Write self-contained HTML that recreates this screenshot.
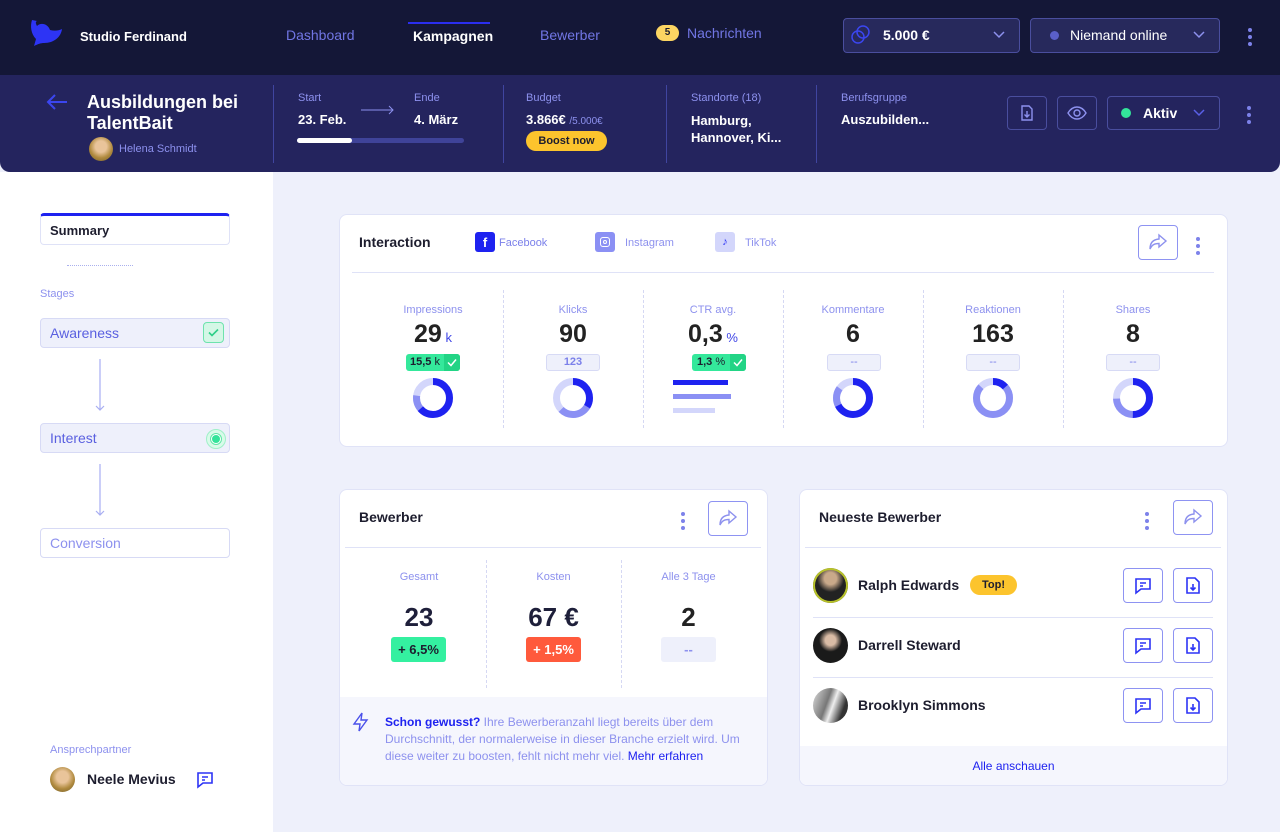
<!DOCTYPE html>
<html><head><meta charset="utf-8"><style>
*{box-sizing:border-box;margin:0;padding:0}
body{width:1280px;height:832px;overflow:hidden;background:#eef0fb;font-family:"Liberation Sans",sans-serif;position:relative;color:#1d1d2e}
.a{position:absolute}
.nav{left:0;top:0;width:1280px;height:75px;background:#141737}
.hdr{left:0;top:75px;width:1280px;height:97px;background:#24245e;border-radius:0 0 10px 10px}
.lbl{font-size:11px;color:#8d91ee}
.w{color:#fff;font-weight:bold;font-size:13px}
.vd{width:1px;background:#4045a0}
.btn{border:1px solid #4a4e9e;border-radius:4px}
.card{background:#fff;border:1px solid #e0e3f7;border-radius:8px}
.col{width:140px;text-align:center}
.dash{border-left:1px dashed #d5d8f3}
.ob{border:1px solid #8e93f2;border-radius:4px;background:#fff}
.hl{height:1px;background:#dfe2f7}
.kb{width:4px}
.kb i{display:block;width:4px;height:4px;border-radius:2px;background:#7d82ea;margin-bottom:3px}
</style></head><body>
<div class="a nav"></div>
<svg class="a" style="left:28px;top:18px" width="36" height="30" viewBox="0 0 36 30"><path d="M4 2C2 8 3 16 8 21L6 28C10 26 13 25 16 25C26 25 33 19 34 11C30 13 26 13 22 12C20 6 13 4 9 8C8 6 7 4 9 3Z" fill="#2d34f5"/></svg>
<div class="a" style="left:80px;top:29px;color:#fff;font-size:13px;font-weight:bold">Studio Ferdinand</div>
<div class="a" style="left:286px;top:27px;color:#7176e4;font-size:14px">Dashboard</div>
<div class="a" style="left:408px;top:22px;width:82px;height:2px;background:#2b2ef0"></div>
<div class="a" style="left:413px;top:28px;color:#fff;font-size:14px;font-weight:bold">Kampagnen</div>
<div class="a" style="left:540px;top:27px;color:#7176e4;font-size:14px">Bewerber</div>
<div class="a" style="left:656px;top:25px;width:23px;height:16px;border-radius:8px;background:#fcd562;font-size:10px;font-weight:bold;text-align:center;line-height:16px">5</div>
<div class="a" style="left:687px;top:25px;color:#7176e4;font-size:14px">Nachrichten</div>
<div class="a btn" style="left:843px;top:18px;width:177px;height:35px;background:#27295c"></div>
<svg class="a" style="left:851px;top:25px" width="20" height="20" viewBox="0 0 20 20" fill="none" stroke="#3b46f0" stroke-width="1.5"><circle cx="7" cy="12" r="6"/><circle cx="12" cy="7" r="6"/></svg>
<div class="a" style="left:883px;top:27px;color:#fff;font-weight:bold;font-size:14px">5.000 €</div>
<svg class="a" style="left:993px;top:31px" width="12" height="8"><path d="M1 1l5 5 5-5" fill="none" stroke="#8d91ee" stroke-width="1.5"/></svg>
<div class="a btn" style="left:1030px;top:18px;width:190px;height:35px;background:#27295c"></div>
<div class="a" style="left:1050px;top:31px;width:9px;height:9px;border-radius:5px;background:#5a5fc8"></div>
<div class="a" style="left:1070px;top:27px;color:#fff;font-size:14px">Niemand online</div>
<svg class="a" style="left:1193px;top:31px" width="12" height="8"><path d="M1 1l5 5 5-5" fill="none" stroke="#8d91ee" stroke-width="1.5"/></svg>
<div class="a kb" style="left:1248px;top:28px"><i></i><i></i><i></i></div>

<div class="a hdr"></div>
<svg class="a" style="left:46px;top:94px" width="22" height="16"><path d="M21 8H2M9 1L2 8l7 7" fill="none" stroke="#3b46f0" stroke-width="2"/></svg>
<div class="a" style="left:87px;top:92px;color:#fff;font-weight:bold;font-size:18px;line-height:21px">Ausbildungen bei<br>TalentBait</div>
<div class="a" style="left:89px;top:137px;width:24px;height:24px;border-radius:12px;background:radial-gradient(circle at 50% 40%,#e9c49a 30%,#b08a3e 60%,#6b5a2a)"></div>
<div class="a" style="left:119px;top:143px;font-size:11px;color:#8d91ee">Helena Schmidt</div>
<div class="a vd" style="left:273px;top:85px;height:78px"></div>
<div class="a lbl" style="left:298px;top:92px">Start</div>
<svg class="a" style="left:361px;top:105px" width="34" height="10"><path d="M0 5h32M28 1l4 4-4 4" fill="none" stroke="#8d91ee" stroke-width="1"/></svg>
<div class="a lbl" style="left:414px;top:92px">Ende</div>
<div class="a w" style="left:298px;top:112px">23. Feb.</div>
<div class="a w" style="left:414px;top:112px">4. März</div>
<div class="a" style="left:297px;top:138px;width:167px;height:5px;border-radius:3px;background:#3f4399"></div>
<div class="a" style="left:297px;top:138px;width:55px;height:5px;border-radius:3px;background:#fff"></div>
<div class="a vd" style="left:503px;top:85px;height:78px"></div>
<div class="a lbl" style="left:526px;top:92px">Budget</div>
<div class="a w" style="left:526px;top:112px">3.866€ <span style="font-weight:normal;font-size:10px;color:#8d91ee">/5.000€</span></div>
<div class="a" style="left:526px;top:131px;width:81px;height:20px;border-radius:10px;background:#fcc42d;font-size:11px;font-weight:bold;text-align:center;line-height:20px">Boost now</div>
<div class="a vd" style="left:666px;top:85px;height:78px"></div>
<div class="a lbl" style="left:691px;top:92px">Standorte (18)</div>
<div class="a w" style="left:691px;top:112px;line-height:17px">Hamburg,<br>Hannover, Ki...</div>
<div class="a vd" style="left:816px;top:85px;height:78px"></div>
<div class="a lbl" style="left:841px;top:92px">Berufsgruppe</div>
<div class="a w" style="left:841px;top:112px">Auszubilden...</div>
<div class="a btn" style="left:1007px;top:96px;width:40px;height:34px"></div>
<svg class="a" style="left:1018px;top:104px" width="18" height="18" viewBox="0 0 18 18" fill="none" stroke="#8d91ee" stroke-width="1.4"><path d="M4 2h7l3 3v11H4z"/><path d="M9 7v6M6.5 10.5L9 13l2.5-2.5"/></svg>
<div class="a btn" style="left:1057px;top:96px;width:40px;height:34px"></div>
<svg class="a" style="left:1067px;top:105px" width="20" height="16" viewBox="0 0 20 16" fill="none" stroke="#8d91ee" stroke-width="1.4"><path d="M1 8C4 3 7 2 10 2s6 1 9 6c-3 5-6 6-9 6S4 13 1 8z"/><circle cx="10" cy="8" r="3"/></svg>
<div class="a btn" style="left:1107px;top:96px;width:113px;height:34px"></div>
<div class="a" style="left:1121px;top:108px;width:10px;height:10px;border-radius:5px;background:#33e49a"></div>
<div class="a" style="left:1143px;top:105px;color:#fff;font-weight:bold;font-size:14px">Aktiv</div>
<svg class="a" style="left:1193px;top:109px" width="12" height="8"><path d="M1 1l5 5 5-5" fill="none" stroke="#5a60e8" stroke-width="1.5"/></svg>
<div class="a kb" style="left:1247px;top:106px"><i></i><i></i><i></i></div>

<!-- sidebar -->
<div class="a" style="left:0;top:172px;width:273px;height:660px;background:#fff"></div>
<div class="a" style="left:40px;top:213px;width:190px;height:32px;border:1px solid #dfe2f7;border-top:3px solid #1e22f0;border-radius:4px;font-size:13px;font-weight:bold;padding:7px 9px">Summary</div>
<div class="a" style="left:67px;top:265px;width:66px;border-top:1px dotted #aab0ee"></div>
<div class="a" style="left:40px;top:288px;font-size:11px;color:#8d91ee">Stages</div>
<div class="a" style="left:40px;top:318px;width:190px;height:30px;background:#eef0fb;border:1px solid #d7daf5;border-radius:4px;font-size:14px;color:#5a60e0;padding:6px 9px">Awareness</div>
<div class="a" style="left:203px;top:322px;width:21px;height:21px;border-radius:4px;background:#d4f7e6;border:1px solid #6ee3ad"></div>
<svg class="a" style="left:208px;top:328px" width="11" height="9"><path d="M1 4.5l3 3 6-6" fill="none" stroke="#2ecf88" stroke-width="1.6"/></svg>
<svg class="a" style="left:94px;top:359px" width="12" height="53"><path d="M6 0v51M2 47l4 4 4-4" fill="none" stroke="#a8aef2" stroke-width="1.2"/></svg>
<div class="a" style="left:40px;top:423px;width:190px;height:30px;background:#eef0fb;border:1px solid #d7daf5;border-radius:4px;font-size:14px;color:#5a60e0;padding:6px 9px">Interest</div>
<div class="a" style="left:206px;top:429px;width:20px;height:20px;border-radius:10px;border:1px solid #9ff0c8;background:#d8fbe9"></div>
<div class="a" style="left:210px;top:433px;width:12px;height:12px;border-radius:6px;border:1px solid #5fe6a6;background:#fff"></div>
<div class="a" style="left:212px;top:435px;width:8px;height:8px;border-radius:4px;background:#33e49a"></div>
<svg class="a" style="left:94px;top:464px" width="12" height="53"><path d="M6 0v51M2 47l4 4 4-4" fill="none" stroke="#a8aef2" stroke-width="1.2"/></svg>
<div class="a" style="left:40px;top:528px;width:190px;height:30px;border:1px solid #d7daf5;border-radius:4px;font-size:14px;color:#8d91ee;padding:6px 9px">Conversion</div>
<div class="a" style="left:50px;top:744px;font-size:11px;color:#8d91ee">Ansprechpartner</div>
<div class="a" style="left:50px;top:767px;width:25px;height:25px;border-radius:13px;background:radial-gradient(circle at 50% 40%,#e9c49a 30%,#b08a3e 60%,#6b5a2a)"></div>
<div class="a" style="left:87px;top:771px;font-size:14px;font-weight:bold">Neele Mevius</div>
<svg class="a" style="left:196px;top:771px" width="18" height="18" viewBox="0 0 18 18" fill="none" stroke="#2d34f5" stroke-width="1.6"><path d="M2 2h14v10H7l-5 4z"/><path d="M6 6h6M6 9h3"/></svg>

<!-- Interaction -->
<div class="a card" style="left:339px;top:214px;width:889px;height:233px"></div>
<div class="a" style="left:359px;top:234px;font-size:14px;font-weight:bold">Interaction</div>
<div class="a" style="left:475px;top:232px;width:20px;height:20px;border-radius:3px;background:#1e22f0;color:#fff;font-weight:bold;font-size:13px;text-align:center;line-height:21px">f</div>
<div class="a" style="left:499px;top:237px;font-size:11px;color:#7b80ea">Facebook</div>
<div class="a" style="left:595px;top:232px;width:20px;height:20px;border-radius:3px;background:#8b90f4"></div>
<div class="a" style="left:600px;top:237px;width:10px;height:10px;border-radius:3px;border:1.5px solid #fff"></div>
<div class="a" style="left:603px;top:240px;width:4px;height:4px;border-radius:2px;border:1px solid #fff"></div>
<div class="a" style="left:625px;top:237px;font-size:11px;color:#8d91ee">Instagram</div>
<div class="a" style="left:715px;top:232px;width:20px;height:20px;border-radius:3px;background:#d3d6fb;color:#2d34f5;font-size:11px;text-align:center;line-height:20px;font-weight:bold">♪</div>
<div class="a" style="left:745px;top:237px;font-size:11px;color:#8d91ee">TikTok</div>
<div class="a ob" style="left:1138px;top:225px;width:40px;height:35px"></div>
<svg class="a" style="left:1148px;top:233px" width="20" height="18" viewBox="0 0 20 18" fill="none" stroke="#8d91ee" stroke-width="1.4"><path d="M11 2l7 6-7 6v-3.5C6 10.5 4 12 2 16c0-6 3-9.5 9-10z"/></svg>
<div class="a kb" style="left:1196px;top:237px"><i></i><i></i><i></i></div>
<div class="a hl" style="left:352px;top:272px;width:862px"></div>
<div class="a dash" style="left:503px;top:290px;height:138px"></div>
<div class="a dash" style="left:643px;top:290px;height:138px"></div>
<div class="a dash" style="left:783px;top:290px;height:138px"></div>
<div class="a dash" style="left:923px;top:290px;height:138px"></div>
<div class="a dash" style="left:1063px;top:290px;height:138px"></div>

<div class="a col lbl" style="left:363px;top:304px">Impressions</div>
<div class="a col lbl" style="left:503px;top:304px">Klicks</div>
<div class="a col lbl" style="left:643px;top:304px">CTR avg.</div>
<div class="a col lbl" style="left:783px;top:304px">Kommentare</div>
<div class="a col lbl" style="left:923px;top:304px">Reaktionen</div>
<div class="a col lbl" style="left:1063px;top:304px">Shares</div>
<div class="a col" style="left:363px;top:320px;font-size:25px;font-weight:bold;color:#222">29<span style="font-size:13px;font-weight:normal;color:#4046e6"> k</span></div>
<div class="a col" style="left:503px;top:320px;font-size:25px;font-weight:bold;color:#222">90</div>
<div class="a col" style="left:643px;top:320px;font-size:25px;font-weight:bold;color:#222">0,3<span style="font-size:13px;font-weight:normal;color:#4046e6"> %</span></div>
<div class="a col" style="left:783px;top:320px;font-size:25px;font-weight:bold;color:#222">6</div>
<div class="a col" style="left:923px;top:320px;font-size:25px;font-weight:bold;color:#222">163</div>
<div class="a col" style="left:1063px;top:320px;font-size:25px;font-weight:bold;color:#222">8</div>

<div class="a" style="left:406px;top:354px;width:54px;height:17px;border-radius:3px;background:#34e89b;overflow:hidden;font-size:11px;font-weight:bold;line-height:17px;padding-left:4px">15,5 <span style="font-weight:normal">k</span><span style="position:absolute;right:0;top:0;width:16px;height:17px;background:#22d485"></span></div>
<svg class="a" style="left:447px;top:358px" width="10" height="9"><path d="M1 4.5l3 3 5-6" fill="none" stroke="#fff" stroke-width="1.5"/></svg>
<div class="a" style="left:546px;top:354px;width:54px;height:17px;border-radius:3px;background:#eef0fb;border:1px solid #d7daf5;font-size:11px;color:#7b80ea;text-align:center;line-height:15px;font-weight:bold">123</div>
<div class="a" style="left:692px;top:354px;width:54px;height:17px;border-radius:3px;background:#34e89b;overflow:hidden;font-size:11px;font-weight:bold;line-height:17px;padding-left:5px">1,3 <span style="font-weight:normal">%</span><span style="position:absolute;right:0;top:0;width:16px;height:17px;background:#22d485"></span></div>
<svg class="a" style="left:733px;top:358px" width="10" height="9"><path d="M1 4.5l3 3 5-6" fill="none" stroke="#fff" stroke-width="1.5"/></svg>
<div class="a" style="left:827px;top:354px;width:54px;height:17px;border-radius:3px;background:#eef0fb;border:1px solid #d7daf5;font-size:11px;color:#7b80ea;text-align:center;line-height:15px">--</div>
<div class="a" style="left:966px;top:354px;width:54px;height:17px;border-radius:3px;background:#eef0fb;border:1px solid #d7daf5;font-size:11px;color:#7b80ea;text-align:center;line-height:15px">--</div>
<div class="a" style="left:1106px;top:354px;width:54px;height:17px;border-radius:3px;background:#eef0fb;border:1px solid #d7daf5;font-size:11px;color:#7b80ea;text-align:center;line-height:15px">--</div>

<svg class="a" style="left:413px;top:378px" width="40" height="40" viewBox="0 0 40 40"><g transform="rotate(-90 20 20)" fill="none" stroke-width="7"><circle cx="20" cy="20" r="16.5" stroke="#d3d6fb"/><circle cx="20" cy="20" r="16.5" stroke="#8b90f4" stroke-dasharray="0 62 18 104"/><circle cx="20" cy="20" r="16.5" stroke="#1e22f0" stroke-dasharray="66 104"/></g></svg>
<svg class="a" style="left:553px;top:378px" width="40" height="40" viewBox="0 0 40 40"><g transform="rotate(-90 20 20)" fill="none" stroke-width="7"><circle cx="20" cy="20" r="16.5" stroke="#d3d6fb"/><circle cx="20" cy="20" r="16.5" stroke="#8b90f4" stroke-dasharray="0 35 30 104"/><circle cx="20" cy="20" r="16.5" stroke="#1e22f0" stroke-dasharray="35 104"/></g></svg>
<div class="a" style="left:673px;top:380px;width:55px;height:5px;background:#1e22f0"></div>
<div class="a" style="left:673px;top:394px;width:58px;height:5px;background:#8b90f4"></div>
<div class="a" style="left:673px;top:408px;width:42px;height:5px;background:#d3d6fb"></div>
<svg class="a" style="left:833px;top:378px" width="40" height="40" viewBox="0 0 40 40"><g transform="rotate(-90 20 20)" fill="none" stroke-width="7"><circle cx="20" cy="20" r="16.5" stroke="#d3d6fb"/><circle cx="20" cy="20" r="16.5" stroke="#8b90f4" stroke-dasharray="0 70 18 104"/><circle cx="20" cy="20" r="16.5" stroke="#1e22f0" stroke-dasharray="70 104"/></g></svg>
<svg class="a" style="left:973px;top:378px" width="40" height="40" viewBox="0 0 40 40"><g transform="rotate(-90 20 20)" fill="none" stroke-width="7"><circle cx="20" cy="20" r="16.5" stroke="#d3d6fb"/><circle cx="20" cy="20" r="16.5" stroke="#8b90f4" stroke-dasharray="0 14 76 104"/><circle cx="20" cy="20" r="16.5" stroke="#1e22f0" stroke-dasharray="14 104"/></g></svg>
<svg class="a" style="left:1113px;top:378px" width="40" height="40" viewBox="0 0 40 40"><g transform="rotate(-90 20 20)" fill="none" stroke-width="7"><circle cx="20" cy="20" r="16.5" stroke="#d3d6fb"/><circle cx="20" cy="20" r="16.5" stroke="#8b90f4" stroke-dasharray="0 52 25 104"/><circle cx="20" cy="20" r="16.5" stroke="#1e22f0" stroke-dasharray="52 104"/></g></svg>

<!-- Bewerber -->
<div class="a card" style="left:339px;top:489px;width:429px;height:297px;overflow:hidden"><div style="position:absolute;left:0;top:207px;width:100%;height:90px;background:#f5f6fd"></div></div>
<div class="a" style="left:359px;top:509px;font-size:14px;font-weight:bold">Bewerber</div>
<div class="a kb" style="left:681px;top:512px"><i></i><i></i><i></i></div>
<div class="a ob" style="left:708px;top:501px;width:40px;height:35px"></div>
<svg class="a" style="left:718px;top:509px" width="20" height="18" viewBox="0 0 20 18" fill="none" stroke="#8d91ee" stroke-width="1.4"><path d="M11 2l7 6-7 6v-3.5C6 10.5 4 12 2 16c0-6 3-9.5 9-10z"/></svg>
<div class="a hl" style="left:345px;top:547px;width:416px"></div>
<div class="a dash" style="left:486px;top:560px;height:128px"></div>
<div class="a dash" style="left:621px;top:560px;height:128px"></div>
<div class="a lbl" style="left:352px;top:571px;width:134px;text-align:center">Gesamt</div>
<div class="a lbl" style="left:486px;top:571px;width:135px;text-align:center">Kosten</div>
<div class="a lbl" style="left:621px;top:571px;width:135px;text-align:center">Alle 3 Tage</div>
<div class="a" style="left:352px;top:602px;width:134px;text-align:center;font-size:26px;font-weight:bold;color:#1e1f3a">23</div>
<div class="a" style="left:486px;top:602px;width:135px;text-align:center;font-size:26px;font-weight:bold;color:#1e1f3a">67 €</div>
<div class="a" style="left:621px;top:602px;width:135px;text-align:center;font-size:26px;font-weight:bold;color:#222">2</div>
<div class="a" style="left:391px;top:637px;width:55px;height:25px;border-radius:3px;background:#34f0a0;font-size:13px;font-weight:bold;text-align:center;line-height:25px">+ 6,5%</div>
<div class="a" style="left:526px;top:637px;width:55px;height:25px;border-radius:3px;background:#ff5a3c;color:#fff;font-size:13px;font-weight:bold;text-align:center;line-height:25px">+ 1,5%</div>
<div class="a" style="left:661px;top:637px;width:55px;height:25px;border-radius:3px;background:#eef0fb;color:#8d91ee;font-size:13px;font-weight:bold;text-align:center;line-height:25px">--</div>
<svg class="a" style="left:352px;top:712px" width="18" height="20" viewBox="0 0 18 20" fill="none" stroke="#4a50ea" stroke-width="1.4"><path d="M10 1L2 12h6l-1 7 8-11H9z"/></svg>
<div class="a" style="left:385px;top:714px;width:358px;font-size:12px;line-height:17px;color:#8d91ee"><b style="color:#1e22f0">Schon gewusst?</b> Ihre Bewerberanzahl liegt bereits über dem Durchschnitt, der normalerweise in dieser Branche erzielt wird. Um diese weiter zu boosten, fehlt nicht mehr viel. <span style="color:#1e22f0">Mehr erfahren</span></div>

<!-- Neueste -->
<div class="a card" style="left:799px;top:489px;width:429px;height:297px;overflow:hidden"><div style="position:absolute;left:0;top:256px;width:100%;height:41px;background:#f5f6fd"></div></div>
<div class="a" style="left:819px;top:509px;font-size:14px;font-weight:bold">Neueste Bewerber</div>
<div class="a kb" style="left:1145px;top:512px"><i></i><i></i><i></i></div>
<div class="a ob" style="left:1173px;top:500px;width:40px;height:35px"></div>
<svg class="a" style="left:1183px;top:508px" width="20" height="18" viewBox="0 0 20 18" fill="none" stroke="#8d91ee" stroke-width="1.4"><path d="M11 2l7 6-7 6v-3.5C6 10.5 4 12 2 16c0-6 3-9.5 9-10z"/></svg>
<div class="a hl" style="left:805px;top:547px;width:416px"></div>
<div class="a hl" style="left:813px;top:617px;width:400px"></div>
<div class="a hl" style="left:813px;top:677px;width:400px"></div>

<div class="a" style="left:813px;top:568px;width:35px;height:35px;border-radius:18px;background:radial-gradient(circle at 50% 30%,#c9a98a 20%,#222 45%);box-shadow:inset 0 0 0 2px #b8c22a"></div>
<div class="a" style="left:858px;top:577px;font-size:14px;font-weight:bold">Ralph Edwards</div>
<div class="a" style="left:970px;top:575px;width:47px;height:20px;border-radius:10px;background:#fcc42d;font-size:11px;font-weight:bold;text-align:center;line-height:20px">Top!</div>
<div class="a" style="left:813px;top:628px;width:35px;height:35px;border-radius:18px;background:radial-gradient(circle at 50% 35%,#d9bba5 18%,#1a1a1a 40%)"></div>
<div class="a" style="left:858px;top:637px;font-size:14px;font-weight:bold">Darrell Steward</div>
<div class="a" style="left:813px;top:688px;width:35px;height:35px;border-radius:18px;background:linear-gradient(110deg,#ddd,#777 40%,#eee 55%,#333 80%)"></div>
<div class="a" style="left:858px;top:697px;font-size:14px;font-weight:bold">Brooklyn Simmons</div>

<div class="a ob" style="left:1123px;top:568px;width:40px;height:35px"></div>
<div class="a ob" style="left:1173px;top:568px;width:40px;height:35px"></div>
<div class="a ob" style="left:1123px;top:628px;width:40px;height:35px"></div>
<div class="a ob" style="left:1173px;top:628px;width:40px;height:35px"></div>
<div class="a ob" style="left:1123px;top:688px;width:40px;height:35px"></div>
<div class="a ob" style="left:1173px;top:688px;width:40px;height:35px"></div>
<svg class="a" style="left:1134px;top:577px" width="18" height="18" viewBox="0 0 18 18" fill="none" stroke="#2d34f5" stroke-width="1.6"><path d="M2 2h14v10H7l-5 4z"/><path d="M6 6h6M6 9h3"/></svg>
<svg class="a" style="left:1134px;top:637px" width="18" height="18" viewBox="0 0 18 18" fill="none" stroke="#2d34f5" stroke-width="1.6"><path d="M2 2h14v10H7l-5 4z"/><path d="M6 6h6M6 9h3"/></svg>
<svg class="a" style="left:1134px;top:697px" width="18" height="18" viewBox="0 0 18 18" fill="none" stroke="#2d34f5" stroke-width="1.6"><path d="M2 2h14v10H7l-5 4z"/><path d="M6 6h6M6 9h3"/></svg>
<svg class="a" style="left:1184px;top:576px" width="18" height="19" viewBox="0 0 18 19" fill="none" stroke="#2d34f5" stroke-width="1.6"><path d="M3 2h8l4 4v11H3z"/><path d="M9 8v6M6.5 11.5L9 14l2.5-2.5"/></svg>
<svg class="a" style="left:1184px;top:636px" width="18" height="19" viewBox="0 0 18 19" fill="none" stroke="#2d34f5" stroke-width="1.6"><path d="M3 2h8l4 4v11H3z"/><path d="M9 8v6M6.5 11.5L9 14l2.5-2.5"/></svg>
<svg class="a" style="left:1184px;top:696px" width="18" height="19" viewBox="0 0 18 19" fill="none" stroke="#2d34f5" stroke-width="1.6"><path d="M3 2h8l4 4v11H3z"/><path d="M9 8v6M6.5 11.5L9 14l2.5-2.5"/></svg>
<div class="a" style="left:799px;top:759px;width:429px;text-align:center;font-size:12px;color:#1e22f0">Alle anschauen</div>
</body></html>
